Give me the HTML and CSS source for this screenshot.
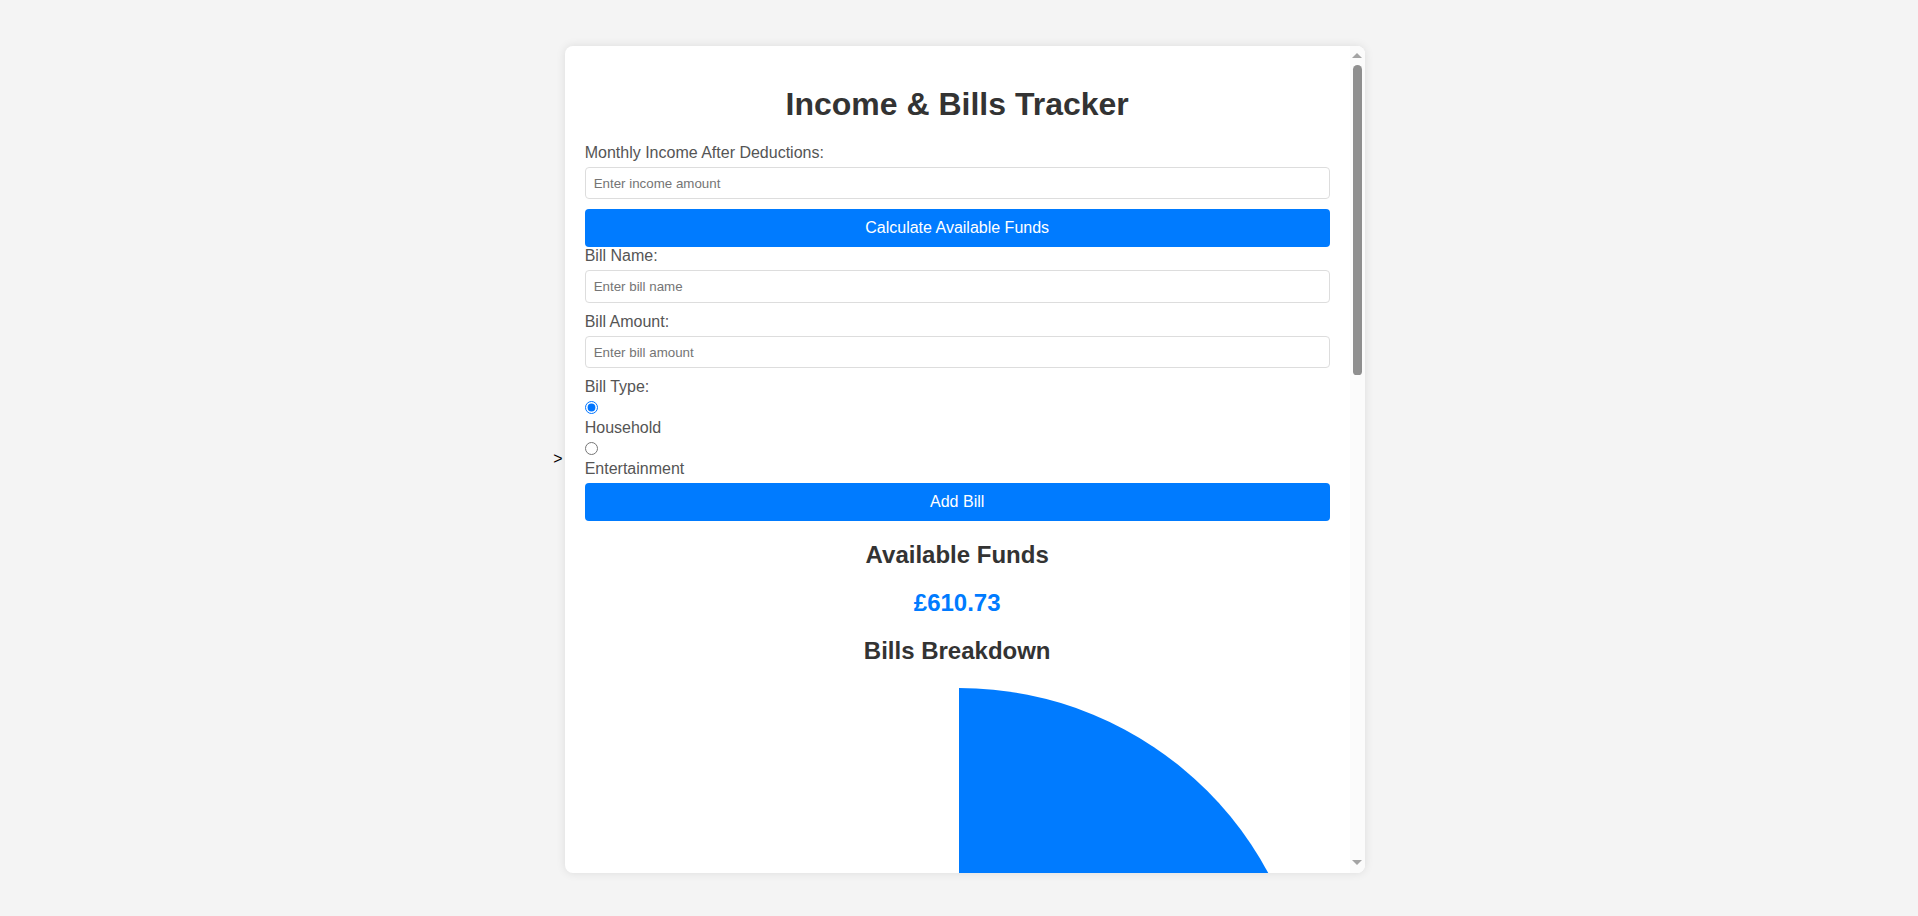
FILE: index.html
```html
<!DOCTYPE html>
<html lang="en">
<head>
<meta charset="utf-8">
<title>Income &amp; Bills Tracker</title>
<link rel="stylesheet" href="styles.css">
</head>
<body class="page">
<span class="stray">&gt;</span>
<div class="card">
  <div class="content">
    <h1 class="title">Income &amp; Bills Tracker</h1>

    <label class="field-label" for="income">Monthly Income After Deductions:</label>
    <input class="text-input" id="income" type="number" placeholder="Enter income amount">
    <button class="btn" type="button">Calculate Available Funds</button>

    <label class="field-label" for="billName">Bill Name:</label>
    <input class="text-input" id="billName" type="text" placeholder="Enter bill name">

    <label class="field-label" for="billAmount">Bill Amount:</label>
    <input class="text-input" id="billAmount" type="number" placeholder="Enter bill amount">

    <label class="field-label">Bill Type:</label>
    <input class="radio" type="radio" id="household" name="billType" value="household" checked>
    <label class="field-label" for="household">Household</label>
    <input class="radio" type="radio" id="entertainment" name="billType" value="entertainment">
    <label class="field-label" for="entertainment">Entertainment</label>

    <button class="btn btn-add" type="button">Add Bill</button>

    <h2 class="section-title">Available Funds</h2>
    <p class="funds">£610.73</p>

    <h2 class="section-title">Bills Breakdown</h2>
    <div class="chart">
      <svg class="pie" width="745" height="708" viewBox="0 0 745 708" xmlns="http://www.w3.org/2000/svg">
        <path d="M374 354 L374 3 A351 351 0 0 1 374 705 Z" fill="#007bff"/>
      </svg>
    </div>
  </div>
  <div class="scrollbar" aria-hidden="true">
    <div class="arrow arrow-up"></div>
    <div class="track">
      <div class="thumb"></div>
    </div>
    <div class="arrow arrow-down"></div>
  </div>
</div>
</body>
</html>
```

FILE: styles.css
```css
html, body {
  margin: 0;
  padding: 0;
}

.page {
  box-sizing: border-box;
  height: 100vh;
  padding-top: 2px;
  display: flex;
  justify-content: center;
  align-items: center;
  background: #f4f4f4;
  font-family: "Liberation Sans", Arial, sans-serif;
  color: #000;
  font-size: 16px;
}

.stray {
  font-size: 16px;
  color: #000;
}

.card {
  box-sizing: border-box;
  width: 800px;
  height: 827px;
  margin-left: 2px;
  display: flex;
  background: #fff;
  border-radius: 8px;
  box-shadow: 0 0 10px rgba(0, 0, 0, 0.1);
  overflow: hidden;
}

.content {
  flex: 1;
  min-width: 0;
  padding: 20px;
  overflow: hidden;
}

.scrollbar {
  width: 15px;
  flex: none;
  display: flex;
  flex-direction: column;
  align-items: center;
  padding: 7px 0 8px;
  box-sizing: border-box;
  background: #fbfbfb;
}

.arrow {
  width: 0;
  height: 0;
  border-left: 5px solid transparent;
  border-right: 5px solid transparent;
}

.arrow-up {
  border-bottom: 5px solid #a3a3a3;
}

.arrow-down {
  border-top: 5px solid #a3a3a3;
}

.track {
  flex: 1;
  width: 100%;
  display: flex;
  justify-content: center;
  padding-top: 7px;
}

.thumb {
  width: 9px;
  height: 310px;
  border-radius: 5px 5px 4px 4px;
  background: #8f8f8f;
}

.title {
  margin: 20px 0 21.44px;
  font-size: 32px;
  font-weight: bold;
  text-align: center;
  color: #333;
}

.field-label {
  display: block;
  margin: 0 0 5px;
  font-size: 16px;
  color: #555;
}

.text-input {
  display: block;
  box-sizing: border-box;
  width: 100%;
  height: 32.5px;
  margin: 0 0 10px;
  padding: 0 8px;
  border: 1px solid #ddd;
  border-radius: 4px;
  font-family: "Liberation Sans", Arial, sans-serif;
  font-size: 13.333px;
  color: #333;
  background: #fff;
}

.text-input::placeholder {
  color: #757575;
}

.radio {
  display: block;
  margin: 5px 0 5px;
}

.btn {
  display: block;
  width: 100%;
  margin: 0;
  padding: 10px;
  border: none;
  border-radius: 4px;
  background: #007bff;
  color: #fff;
  font-family: "Liberation Sans", Arial, sans-serif;
  font-size: 16px;
  cursor: pointer;
}

.btn-add {
  margin-top: 4px;
}

.section-title {
  margin: 19.92px 0;
  font-size: 24px;
  font-weight: bold;
  text-align: center;
  color: #333;
}

.funds {
  margin: 0;
  font-size: 24px;
  font-weight: bold;
  text-align: center;
  color: #007bff;
}

.chart {
  height: 1454px;
}

.pie {
  display: block;
}
```
